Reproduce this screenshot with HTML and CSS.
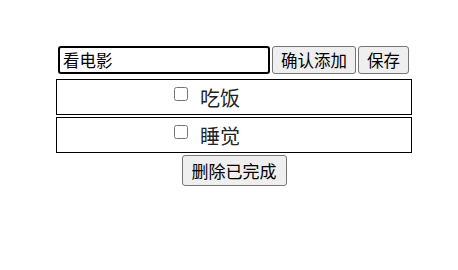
FILE: index.html
```html
<!DOCTYPE html>
<html lang="zh">
<head>
    <meta charset="UTF-8">
    <title>待办事项</title>
    <link rel="stylesheet" href="styles.css">
</head>
<body>
    <div class="todo-app">
        <div class="todo-header">
            <input class="todo-input" type="text" value="看电影">
            <button class="todo-btn">确认添加</button>
            <button class="todo-btn">保存</button>
        </div>
        <ul class="todo-list">
            <li class="todo-item"><input type="checkbox" class="todo-check"><span>吃饭</span></li>
            <li class="todo-item"><input type="checkbox" class="todo-check"><span>睡觉</span></li>
        </ul>
        <div class="todo-footer">
            <button class="todo-btn todo-btn-del">删除已完成</button>
        </div>
    </div>
</body>
</html>
```

FILE: styles.css
```css
body {
    margin: 0;
    font-family: "Noto Sans CJK SC", "Microsoft YaHei", sans-serif;
}

.todo-app {
    width: 356px;
    margin: 46px 0 0 56px;
}

.todo-header {
    display: flex;
    align-items: stretch;
    gap: 2px;
    height: 28px;
}

.todo-input {
    width: 212px;
    box-sizing: border-box;
    margin: 0 0 0 2px;
    padding: 0 3px;
    border: 2px solid #000;
    border-radius: 3px;
    font-family: inherit;
    font-size: 16.5px;
    line-height: 20px;
    outline: none;
    color: #000;
}

.todo-btn {
    font-family: inherit;
    font-size: 16.5px;
    padding: 0 8px;
    border: 1px solid #767676;
    border-radius: 3px;
    background: #efefef;
    color: #000;
}

.todo-list {
    list-style: none;
    margin: 5px 0 0;
    padding: 0;
}

.todo-item {
    display: flex;
    justify-content: center;
    align-items: center;
    height: 34px;
    margin-bottom: 2px;
    padding-right: 54px;
    border: 1px solid #000;
    font-size: 20px;
    color: #222;
}

.todo-check {
    width: 14px;
    height: 14px;
    margin: 0 12px 0 0;
    position: relative;
    top: -3px;
}

.todo-footer {
    display: flex;
    justify-content: center;
}

.todo-btn-del {
    height: 31px;
    font-size: 17px;
    padding: 0 9px;
}
```
